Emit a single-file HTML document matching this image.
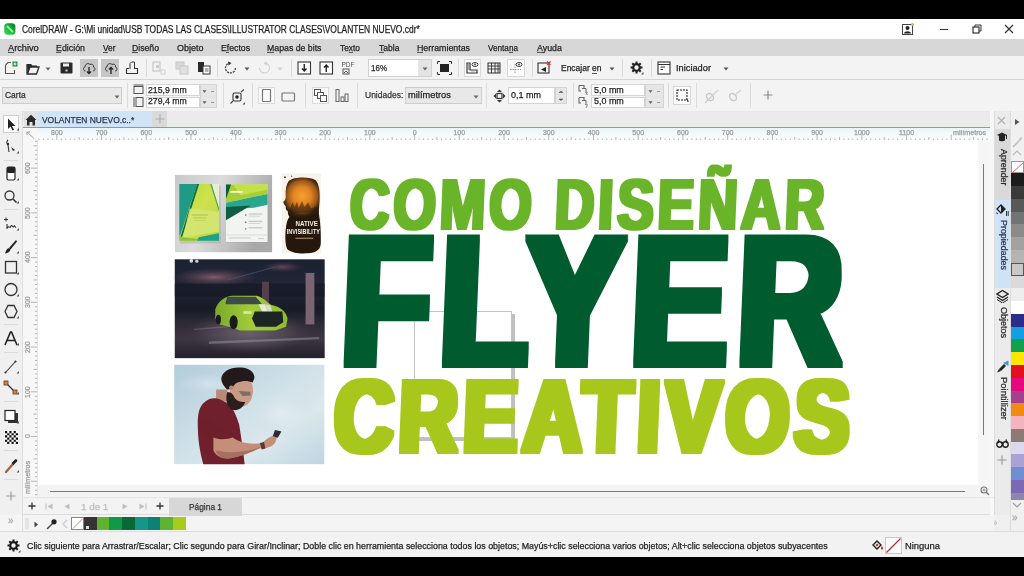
<!DOCTYPE html>
<html><head><meta charset="utf-8">
<style>
*{margin:0;padding:0;box-sizing:border-box}
html,body{width:1024px;height:576px;overflow:hidden;background:#f0f0f0;-webkit-font-smoothing:antialiased;will-change:transform;font-family:"Liberation Sans",sans-serif;color:#222}
.a{position:absolute}
#top{left:0;top:0;width:1024px;height:19px;background:#000}
#bot{left:0;top:556.5px;width:1024px;height:20px;background:#000}
#title{left:0;top:19px;width:1024px;height:20px;background:#fff}
#menu{left:0;top:39px;width:1024px;height:16.5px;background:#d7d7d7}
#tb1{left:0;top:55.5px;width:1024px;height:24.5px;background:#f3f3f3;border-bottom:1px solid #d4d4d4}
#prop{left:0;top:80px;width:1024px;height:31px;background:#f3f3f3}
#tabbar{left:23px;top:111px;width:969px;height:16px;background:linear-gradient(#ede8ee,#e8eee9)}
#ruler{left:37px;top:127px;width:955px;height:13px;background:linear-gradient(#e6f3f6,#f6fafb 55%,#fafafa)}
#vruler{left:23px;top:127px;width:14px;height:370px;background:#f7f7f7}
#toolbox{left:0;top:111px;width:23px;height:420px;background:#f0f0f0}
#canvas{left:37px;top:140px;width:941px;height:345px;background:#fff}
#cright{left:978px;top:140px;width:15px;height:357px;background:#f6f6f6}
#hscroll{left:37px;top:485px;width:941px;height:12px;background:#f3f3f3}
#pagenav{left:23px;top:497px;width:971px;height:18px;background:#f3f3f3;border-bottom:1px solid #dcdcdc}
#palrow{left:0;top:515px;width:994px;height:16px;background:#f5f5f5}
#status{left:0;top:531px;width:1024px;height:25px;background:#f0f0f0;border-top:1px solid #dedede}
#dock{left:993px;top:111px;width:17px;height:404px;background:#ececec}
#pal{left:1009px;top:111px;width:15px;height:420px;background:#f0f0f0}
.t{position:absolute;white-space:nowrap;line-height:1;font-family:"Liberation Sans",sans-serif;-webkit-text-stroke:0.25px currentColor}

.big{position:absolute;font-weight:bold;white-space:nowrap;transform-origin:0 0;line-height:1}
</style></head><body>
<div class="a" id="top"></div>
<div class="a" id="bot"></div>
<div class="a" id="title"></div>
<div class="a menu" id="menu"></div>
<div class="a" id="tb1"></div>
<div class="a" id="prop"></div>
<div class="a" id="toolbox"></div>
<div class="a" id="tabbar"></div>
<div class="a" id="ruler"></div>
<div class="a" id="vruler"></div>
<div class="a" id="canvas"></div>
<div class="a" id="cright"></div>
<div class="a" id="hscroll"></div>
<div class="a" id="pagenav"></div>
<div class="a" id="palrow"></div>
<div class="a" id="status"></div>
<div class="a" id="dock"></div>
<div class="a" id="pal"></div>

<svg class="a" style="left:172px;top:172px;width:103px;height:84px" viewBox="0 0 706 576" preserveAspectRatio="none">
<defs><linearGradient id="mg" x1="0" y1="0" x2="1" y2="0.3"><stop offset="0" stop-color="#c9c9c9"/><stop offset="0.45" stop-color="#dcdcdc"/><stop offset="1" stop-color="#a9a9a9"/></linearGradient>
<linearGradient id="f1g" x1="0" y1="0" x2="1" y2="1"><stop offset="0" stop-color="#b8d83a"/><stop offset="0.5" stop-color="#cfe24e"/><stop offset="1" stop-color="#b0d640"/></linearGradient></defs>
<rect x="20" y="20" width="666" height="530" fill="url(#mg)"/>
<rect x="55" y="95" width="280" height="395" fill="#9a9a9a" opacity="0.35"/>
<rect x="375" y="95" width="285" height="390" fill="#9a9a9a" opacity="0.35"/>
<rect x="50" y="82" width="272" height="390" fill="url(#f1g)"/>
<polygon points="50,82 172,82 60,423 50,440" fill="#1f9a84"/>
<polygon points="172,82 186,82 72,440 56,450" fill="#0d6e48"/>
<polygon points="270,82 322,82 322,250" fill="#e6efd6"/>
<polygon points="262,82 272,82 322,245 322,270" fill="#2a8a50" opacity="0.7"/>
<polygon points="121,251 322,272 322,409 74,447" fill="#d6e676" opacity="0.85"/>
<polygon points="50,440 74,447 184,460 160,472 50,472" fill="#8cc440"/>
<polygon points="184,447 322,420 322,472 170,472" fill="#1fa088"/>
<rect x="135" y="290" width="110" height="10" fill="#9ab83a" opacity="0.55"/>
<rect x="145" y="310" width="90" height="8" fill="#9ab83a" opacity="0.5"/>
<rect x="150" y="330" width="80" height="6" fill="#9ab83a" opacity="0.4"/>
<rect x="370" y="85" width="285" height="395" fill="#f2f4f2"/>
<polygon points="370,85 655,85 655,150 370,210" fill="#a5cf35"/>
<polygon points="420,85 655,85 655,120 470,160" fill="#c6e04a"/>
<polygon points="370,210 655,150 655,225 560,245 370,255" fill="#2aa58f"/>
<polygon points="370,85 405,85 370,185" fill="#0d5a3e"/>
<polygon points="370,240 540,230 370,330" fill="#0f5d44"/>
<rect x="400" y="130" width="85" height="12" fill="#ffffff" opacity="0.9"/>
<rect x="525" y="285" width="95" height="6" fill="#b0b5b5"/><rect x="525" y="300" width="80" height="5" fill="#c5c9c9"/>
<rect x="525" y="335" width="95" height="6" fill="#b0b5b5"/><rect x="525" y="350" width="80" height="5" fill="#c5c9c9"/>
<rect x="525" y="380" width="95" height="6" fill="#b0b5b5"/><rect x="500" y="290" width="10" height="10" fill="#777"/><rect x="500" y="340" width="10" height="10" fill="#777"/><rect x="500" y="385" width="10" height="10" fill="#888"/>
<rect x="375" y="430" width="275" height="4" fill="#c8cccc"/><rect x="390" y="450" width="150" height="5" fill="#bbb"/><rect x="590" y="455" width="40" height="5" fill="#bbb"/>
</svg>
<svg class="a" style="left:276px;top:172px;width:50px;height:86px" viewBox="0 0 335 576" preserveAspectRatio="none">
<defs><radialGradient id="pg" gradientUnits="userSpaceOnUse" cx="175" cy="160" r="150"><stop offset="0" stop-color="#f7a232"/><stop offset="0.4" stop-color="#e08422"/><stop offset="0.68" stop-color="#985818"/><stop offset="0.86" stop-color="#3a2412"/><stop offset="1" stop-color="#26170d"/></radialGradient></defs>
<rect x="40" y="10" width="262" height="535" fill="#f8f2ea"/>
<path d="M85,60 C120,30 230,30 265,55 C292,80 298,150 290,220 C288,250 285,270 290,300 C298,340 302,420 300,480 C296,520 270,540 210,545 C150,548 100,540 75,515 C62,490 60,430 65,390 C68,350 75,320 90,300 C82,288 78,278 80,265 C70,255 62,245 66,232 C58,220 48,212 50,200 C62,188 66,175 65,160 C62,120 68,85 85,60 Z" fill="url(#pg)"/>
<path d="M95,245 L110,205 L125,235 L140,200 L152,240 L175,195 L190,235 L215,205 L235,245 L270,230 L280,270 L90,275Z" fill="#2e1a0c" opacity="0.55"/>
<circle cx="60" cy="35" r="6" fill="#3a2a20"/><circle cx="105" cy="28" r="4" fill="#3a2a20"/><circle cx="285" cy="505" r="8" fill="#3a2a20" opacity="0.6"/>
<text x="130" y="362" font-family="Liberation Sans" font-weight="bold" font-size="44" fill="#f4efe8" textLength="150" lengthAdjust="spacingAndGlyphs">NATIVE</text>
<text x="72" y="418" font-family="Liberation Sans" font-weight="bold" font-size="48" fill="#f4efe8" textLength="222" lengthAdjust="spacingAndGlyphs">INVISIBILITY</text>
<rect x="130" y="440" width="120" height="9" fill="#b09a80" opacity="0.75"/>
</svg>
<svg class="a" style="left:172px;top:256px;width:156px;height:106px" viewBox="0 0 848 576" preserveAspectRatio="none">
<defs><linearGradient id="cg" x1="0" y1="0" x2="0" y2="1"><stop offset="0" stop-color="#1c2232"/><stop offset="0.3" stop-color="#222636"/><stop offset="0.5" stop-color="#161b26"/><stop offset="0.62" stop-color="#2a2834"/><stop offset="0.8" stop-color="#3c3642"/><stop offset="1" stop-color="#23202a"/></linearGradient>
<radialGradient id="pk" cx="0.5" cy="0.5" r="0.5"><stop offset="0" stop-color="#8a6070" stop-opacity="0.9"/><stop offset="1" stop-color="#5a4050" stop-opacity="0"/></radialGradient>
<radialGradient id="fl" cx="0.5" cy="0.5" r="0.5"><stop offset="0" stop-color="#6a6068"/><stop offset="0.6" stop-color="#4a4250"/><stop offset="1" stop-color="#3a3442" stop-opacity="0"/></radialGradient>
<linearGradient id="carg" x1="0" y1="0" x2="1" y2="0"><stop offset="0" stop-color="#7aaa2a"/><stop offset="0.5" stop-color="#a4cc3a"/><stop offset="1" stop-color="#8cbc30"/></linearGradient></defs>
<rect x="15" y="18" width="815" height="537" fill="url(#cg)"/>
<ellipse cx="230" cy="115" rx="230" ry="50" fill="url(#pk)"/>
<ellipse cx="600" cy="60" rx="110" ry="28" fill="url(#pk)" opacity="0.7"/>
<path d="M300,130 L560,60" stroke="#505a70" stroke-width="6" opacity="0.6"/>
<circle cx="105" cy="26" r="10" fill="#e8f4ff" opacity="0.9"/><circle cx="135" cy="28" r="9" fill="#e0f0ff" opacity="0.85"/>
<rect x="15" y="150" width="815" height="70" fill="#131822" opacity="0.6"/>
<rect x="489" y="140" width="38" height="150" fill="#54404c"/>
<rect x="726" y="92" width="48" height="280" fill="#7a6472"/>
<ellipse cx="420" cy="420" rx="360" ry="110" fill="url(#fl)"/>
<polygon points="200,465 800,440 800,452 200,478" fill="#b0a8b4" opacity="0.4"/>
<polygon points="120,395 300,380 300,388 120,402" fill="#a09aa8" opacity="0.3"/>
<path d="M235,290 C250,245 290,218 330,216 L460,216 C500,226 520,256 540,266 C590,276 620,300 628,340 L620,385 L560,405 L370,405 L330,390 L260,372 L235,340 Z" fill="url(#carg)"/>
<path d="M300,222 L455,222 L490,262 L290,262 Z" fill="#3c4a48"/>
<path d="M450,302 L600,302 L605,360 L565,385 L455,385 L435,340 Z" fill="#1c2424"/>
<path d="M470,262 L505,262 L520,300 L490,300 Z" fill="#e6eadc"/>
<path d="M505,262 L535,268 L545,300 L522,300 Z" fill="#d6dcc8"/>
<ellipse cx="335" cy="360" rx="22" ry="38" fill="#181a1c"/>
<ellipse cx="252" cy="345" rx="14" ry="26" fill="#181a1c"/>
<rect x="388" y="300" width="44" height="14" fill="#e9f0c8" opacity="0.8"/>
</svg>
<svg class="a" style="left:172px;top:362px;width:156px;height:106px" viewBox="0 0 848 576" preserveAspectRatio="none">
<defs><linearGradient id="sg" x1="0" y1="0" x2="1" y2="1"><stop offset="0" stop-color="#b2cddb"/><stop offset="0.5" stop-color="#d2e2e9"/><stop offset="0.7" stop-color="#dbe8ed"/><stop offset="1" stop-color="#bed5e0"/></linearGradient>
<radialGradient id="cl" cx="0.5" cy="0.5" r="0.5"><stop offset="0" stop-color="#e2ecef"/><stop offset="1" stop-color="#d0e0e8" stop-opacity="0"/></radialGradient></defs>
<rect x="12" y="15" width="816" height="540" fill="url(#sg)"/>
<ellipse cx="600" cy="280" rx="200" ry="140" fill="url(#cl)"/>
<ellipse cx="200" cy="120" rx="180" ry="60" fill="url(#cl)" opacity="0.6"/>
<path d="M240,150 L300,150 L305,215 L240,215 Z" fill="#b88a78"/>
<path d="M175,220 C200,195 235,190 265,205 L305,225 C330,245 350,290 365,340 C375,400 385,470 395,555 L170,555 C150,480 140,420 140,330 C140,280 150,240 175,220 Z" fill="#70202c"/>
<path d="M145,330 C160,300 200,300 225,330 C255,360 300,385 330,395 L330,420 C290,430 250,430 215,420 C180,410 150,380 145,330 Z" fill="#6d1f2a"/>
<path d="M225,410 C260,425 300,420 330,410 C370,440 430,450 490,440 C510,420 540,400 565,395 C575,410 565,440 545,455 C520,470 495,470 470,470 C420,490 360,520 300,525 C260,525 235,505 225,480 Z" fill="#c58e78"/>
<path d="M240,480 C300,500 400,490 480,462 L470,472 C420,495 360,520 300,525 C260,525 240,505 240,480 Z" fill="#a87060"/>
<path d="M478,440 L500,435 L508,470 L488,475 Z" fill="#5a3a30"/>
<path d="M560,370 L595,378 L575,412 L548,402 Z" fill="#2a2a30"/>
<path d="M320,90 C360,80 420,90 435,120 C445,150 440,180 430,205 C420,225 400,240 380,245 L330,240 C315,200 310,140 320,90 Z" fill="#c99a86"/>
<path d="M300,165 C315,160 330,170 338,190 C348,210 370,218 398,218 C390,240 372,260 345,262 C322,262 305,245 298,220 C294,200 295,180 300,165 Z" fill="#2b1e1c"/>
<path d="M268,90 C272,50 320,25 375,30 C420,32 450,55 448,88 L438,112 C415,100 385,100 355,112 C340,120 332,132 328,145 L300,150 C285,135 268,115 268,90 Z" fill="#221a1a"/>
<path d="M360,158 L425,162 L428,182 L385,185 Z" fill="#5a5a60" opacity="0.7"/><circle cx="322" cy="140" r="12" fill="#b88a78"/>
</svg>
<div class="a" style="left:414px;top:311px;width:98px;height:127px;border:1px solid #c4c4c4;box-shadow:3px 3px 0 #c0c0c0"></div>
<!--BIG-->
<svg class="a" style="left:0;top:0" width="1024" height="576" viewBox="0 0 1024 576"><defs>
<filter id="dt1" x="0" y="0" width="1024" height="576" filterUnits="userSpaceOnUse"><feMorphology operator="dilate" radius="2.20 1.20"/></filter>
<filter id="dt2" x="0" y="0" width="1024" height="576" filterUnits="userSpaceOnUse"><feMorphology operator="dilate" radius="6.00 3.00"/></filter>
<filter id="dt3" x="0" y="0" width="1024" height="576" filterUnits="userSpaceOnUse"><feMorphology operator="dilate" radius="3.50 1.80"/></filter>
</defs>
<g filter="url(#dt1)"><text transform="translate(349.00 229.00) scale(0.7674 1) skewX(-3.0)" font-family="Liberation Sans" font-weight="bold" font-size="71.43" letter-spacing="5.0" fill="#6bb42c">COMO DISEÑAR</text></g>
<g filter="url(#dt2)"><text transform="translate(340.00 365.00) scale(0.7781 1) skewX(-3.0)" font-family="Liberation Sans" font-weight="bold" font-size="185.34" letter-spacing="13.0" fill="#005c2e">FLYER</text></g>
<g filter="url(#dt3)"><text transform="translate(333.00 452.00) scale(0.7922 1) skewX(-3.0)" font-family="Liberation Sans" font-weight="bold" font-size="103.14" letter-spacing="7.0" fill="#a8c71a">CREATIVOS</text></g>
</svg>
<!--/BIG-->
<!--C1-->
<svg class="a" style="left:3px;top:22px" width="14" height="14" viewBox="0 0 14 14"><defs><linearGradient id="lg" x1="0" y1="1" x2="1" y2="0"><stop offset="0" stop-color="#2fe05c"/><stop offset="0.5" stop-color="#1cb841"/><stop offset="1" stop-color="#07721c"/></linearGradient></defs><rect x="1.2" y="1.2" width="11.2" height="11.5" rx="3.5" fill="url(#lg)"/><path d="M4.5,4.5 L9.5,9.5" stroke="#9cf09c" stroke-width="1.8" stroke-linecap="round"/></svg>
<div class="a t" style="left:22px;top:24.55px;font-size:10px;color:#222;transform:scaleX(0.842);transform-origin:0 0">CorelDRAW - G:\Mi unidad\USB TODAS LAS CLASES\ILLUSTRATOR CLASES\VOLANTEN NUEVO.cdr*</div>
<svg class="a" style="left:902px;top:23px" width="12" height="12" viewBox="0 0 12 12"><rect x="0.5" y="1.5" width="10" height="10" fill="#fff" stroke="#444" stroke-width="1"/><circle cx="5.5" cy="5" r="2" fill="#222"/><path d="M2,10.5 C2.5,7.5 8.5,7.5 9,10.5Z" fill="#222"/><circle cx="10.5" cy="1.5" r="1.5" fill="#f0a050"/></svg>
<div class="a" style="left:940px;top:29px;width:8px;height:1.4px;background:#333"></div>
<svg class="a" style="left:972px;top:24px" width="10" height="10" viewBox="0 0 10 10"><rect x="1" y="3" width="6" height="6" fill="none" stroke="#333" stroke-width="1.2"/><path d="M3,3 V1 H9 V7 H7" fill="none" stroke="#333" stroke-width="1"/></svg>
<svg class="a" style="left:1004px;top:24px" width="10" height="10" viewBox="0 0 10 10"><path d="M1,1 L9,9 M9,1 L1,9" stroke="#333" stroke-width="1.2"/></svg>
<div class="a t" style="left:7.5px;top:43px;font-size:9.6px;color:#1e1e1e;transform:scaleX(0.961);transform-origin:0 0">Archivo</div>
<div class="a" style="left:7.50px;top:52.3px;width:6.15px;height:0.9px;background:#555"></div>
<div class="a t" style="left:55.5px;top:43px;font-size:9.6px;color:#1e1e1e;transform:scaleX(0.921);transform-origin:0 0">Edición</div>
<div class="a" style="left:55.50px;top:52.3px;width:5.90px;height:0.9px;background:#555"></div>
<div class="a t" style="left:102.5px;top:43px;font-size:9.6px;color:#1e1e1e;transform:scaleX(0.867);transform-origin:0 0">Ver</div>
<div class="a" style="left:102.50px;top:52.3px;width:5.55px;height:0.9px;background:#555"></div>
<div class="a t" style="left:132px;top:43px;font-size:9.6px;color:#1e1e1e;transform:scaleX(0.904);transform-origin:0 0">Diseño</div>
<div class="a" style="left:132.00px;top:52.3px;width:6.26px;height:0.9px;background:#555"></div>
<div class="a t" style="left:176.5px;top:43px;font-size:9.6px;color:#1e1e1e;transform:scaleX(0.937);transform-origin:0 0">Objeto</div>
<div class="a" style="left:188.50px;top:52.3px;width:2.00px;height:0.9px;background:#555"></div>
<div class="a t" style="left:220.5px;top:43px;font-size:9.6px;color:#1e1e1e;transform:scaleX(0.906);transform-origin:0 0">Efectos</div>
<div class="a" style="left:226.30px;top:52.3px;width:2.42px;height:0.9px;background:#555"></div>
<div class="a t" style="left:266.5px;top:43px;font-size:9.6px;color:#1e1e1e;transform:scaleX(0.912);transform-origin:0 0">Mapas de bits</div>
<div class="a" style="left:266.50px;top:52.3px;width:7.29px;height:0.9px;background:#555"></div>
<div class="a t" style="left:339.75px;top:43px;font-size:9.6px;color:#1e1e1e;transform:scaleX(0.872);transform-origin:0 0">Texto</div>
<div class="a" style="left:348.59px;top:52.3px;width:4.18px;height:0.9px;background:#555"></div>
<div class="a t" style="left:378.5px;top:43px;font-size:9.6px;color:#1e1e1e;transform:scaleX(0.893);transform-origin:0 0">Tabla</div>
<div class="a" style="left:378.50px;top:52.3px;width:5.24px;height:0.9px;background:#555"></div>
<div class="a t" style="left:416.75px;top:43px;font-size:9.6px;color:#1e1e1e;transform:scaleX(0.920);transform-origin:0 0">Herramientas</div>
<div class="a" style="left:416.75px;top:52.3px;width:6.38px;height:0.9px;background:#555"></div>
<div class="a t" style="left:488px;top:43px;font-size:9.6px;color:#1e1e1e;transform:scaleX(0.851);transform-origin:0 0">Ventana</div>
<div class="a" style="left:508.91px;top:52.3px;width:4.55px;height:0.9px;background:#555"></div>
<div class="a t" style="left:537px;top:43px;font-size:9.6px;color:#1e1e1e;transform:scaleX(0.924);transform-origin:0 0">Ayuda</div>
<div class="a" style="left:537.00px;top:52.3px;width:5.92px;height:0.9px;background:#555"></div>
<!--/C1-->
<!--C2-->
<svg class="a" style="left:4px;top:61px" width="14" height="14" viewBox="0 0 14 14"><path d="M1.5,4 L4,1.5 H7 M1.5,4 V12.5 H10.5 V9" fill="none" stroke="#555" stroke-width="1.1"/><rect x="8.5" y="0.5" width="5" height="5" fill="#1c8f4a"/><path d="M11,1.5 V4.5 M9.5,3 H12.5" stroke="#fff" stroke-width="1"/></svg>
<svg class="a" style="left:26px;top:62px" width="14" height="13" viewBox="0 0 14 13"><path d="M1,2 H5 L6.5,3.5 H11 V5 H4 L1.5,12 Z" fill="#2a2a2a"/><path d="M1,2 V12 H10.5 L13,5 H4 L1.5,12" fill="none" stroke="#2a2a2a" stroke-width="1.3"/></svg>
<svg class="a" style="left:45px;top:66.5px" width="6" height="4" viewBox="0 0 6 4"><path d="M0.5,0.5 L5.5,0.5 L3,3.5Z" fill="#666"/></svg>
<svg class="a" style="left:60px;top:62px" width="13" height="12" viewBox="0 0 13 12"><rect x="0.5" y="0.5" width="12" height="11" rx="1" fill="#2a2a2a"/><rect x="3" y="1.5" width="6" height="3" fill="#eee"/><rect x="5.5" y="7.5" width="2" height="2" fill="#ccc"/></svg>
<div class="a" style="left:80px;top:59px;width:17.5px;height:17.5px;background:#c6c6c6;"></div>
<div class="a" style="left:101.4px;top:59px;width:17.6px;height:17.5px;background:#c6c6c6;"></div>
<svg class="a" style="left:82px;top:61px" width="14" height="14" viewBox="0 0 14 14"><path d="M3.5,10 C1,10 0.8,6.5 3,6 C3,3 6,1.5 8,3.5 C9.5,2.5 12,3.5 11.5,6 C13.5,6.5 13.5,10 11,10" fill="none" stroke="#333" stroke-width="1"/><path d="M7,6 V12.5 M5,10.5 L7,12.5 L9,10.5" fill="none" stroke="#222" stroke-width="1.3"/></svg>
<svg class="a" style="left:103.5px;top:61px" width="14" height="14" viewBox="0 0 14 14"><path d="M3.5,10 C1,10 0.8,6.5 3,6 C3,3 6,1.5 8,3.5 C9.5,2.5 12,3.5 11.5,6 C13.5,6.5 13.5,10 11,10" fill="none" stroke="#333" stroke-width="1"/><path d="M7,13 V6.5 M5,8.5 L7,6.5 L9,8.5" fill="none" stroke="#222" stroke-width="1.3"/></svg>
<svg class="a" style="left:125px;top:61px" width="14" height="14" viewBox="0 0 14 14"><path d="M5,8 V2.5 L6.5,1 H9.5 V8" fill="none" stroke="#333" stroke-width="1"/><path d="M1.5,7.5 H4 M10,7.5 H12.5 V12.5 H1.5 V7.5" fill="none" stroke="#333" stroke-width="1.1"/></svg>
<div class="a" style="left:145.5px;top:59px;width:1px;height:18px;background:#dcdcdc;"></div>
<svg class="a" style="left:152px;top:61px" width="14" height="14" viewBox="0 0 14 14"><rect x="1" y="1" width="7" height="9" fill="none" stroke="#c8c8c8" stroke-width="1.2"/><rect x="4" y="4" width="3" height="3" fill="#ccc"/><rect x="9" y="9" width="4" height="4" fill="none" stroke="#d0d0d0"/></svg>
<svg class="a" style="left:175px;top:61px" width="14" height="14" viewBox="0 0 14 14"><rect x="1" y="1" width="8" height="7" fill="#d8d8d8" stroke="#c8c8c8"/><rect x="5" y="5" width="8" height="8" fill="#e0e0e0" stroke="#c8c8c8"/></svg>
<svg class="a" style="left:197px;top:61px" width="14" height="14" viewBox="0 0 14 14"><rect x="1" y="1" width="6" height="10" fill="#2a2a2a"/><rect x="6" y="5" width="7" height="8" fill="#fff" stroke="#333"/><path d="M8,8 H11.5 M8,10 H11.5" stroke="#666"/></svg>
<div class="a" style="left:217px;top:59px;width:1px;height:18px;background:#dcdcdc;"></div>
<svg class="a" style="left:224px;top:61px" width="14" height="14" viewBox="0 0 14 14"><path d="M11.5,7 A5,5 0 1 1 6,2" fill="none" stroke="#444" stroke-width="1.2" stroke-dasharray="2.2 0.8"/><path d="M4,0.5 L7.5,2 L4.5,4.5Z" fill="#333"/></svg>
<svg class="a" style="left:243.5px;top:67px" width="6" height="4" viewBox="0 0 6 4"><path d="M0.5,0.5 L5.5,0.5 L3,3.5Z" fill="#555"/></svg>
<svg class="a" style="left:257px;top:61px" width="14" height="14" viewBox="0 0 14 14"><path d="M2.5,7 A5,5 0 1 0 8,2" fill="none" stroke="#cfcfcf" stroke-width="1.2"/><path d="M10,0.5 L6.5,2 L9.5,4.5Z" fill="#cfcfcf"/></svg>
<svg class="a" style="left:276.5px;top:67px" width="6" height="4" viewBox="0 0 6 4"><path d="M0.5,0.5 L5.5,0.5 L3,3.5Z" fill="#cfcfcf"/></svg>
<div class="a" style="left:291px;top:59px;width:1px;height:18px;background:#dcdcdc;"></div>
<svg class="a" style="left:297px;top:61px" width="15" height="14" viewBox="0 0 15 14"><rect x="1" y="1" width="12.5" height="12" fill="#fff" stroke="#333" stroke-width="1.1"/><path d="M7.25,3 V10 M5,7.5 L7.25,10 L9.5,7.5" fill="none" stroke="#222" stroke-width="1.4"/></svg>
<svg class="a" style="left:319px;top:61px" width="15" height="14" viewBox="0 0 15 14"><rect x="1" y="1" width="12.5" height="12" fill="#fff" stroke="#333" stroke-width="1.1"/><path d="M7.25,11 V4 M5,6.5 L7.25,4 L9.5,6.5" fill="none" stroke="#222" stroke-width="1.4"/></svg>
<svg class="a" style="left:341px;top:60px" width="15" height="16" viewBox="0 0 15 16"><text x="0.5" y="6.5" font-family="Liberation Sans" font-size="6.5" fill="#555">PDF</text><rect x="2" y="9" width="6" height="5" fill="none" stroke="#555" stroke-width="1"/><path d="M3,13 L5,11 L7,13" stroke="#555" fill="none"/></svg>
<div class="a" style="left:367.5px;top:59px;width:64px;height:17.5px;background:#fff;border:1px solid #d0d0d0;"></div>
<div class="a" style="left:418px;top:60px;width:13px;height:15.5px;background:#e4e4e4;"></div>
<svg class="a" style="left:421.5px;top:66.5px" width="6" height="4" viewBox="0 0 6 4"><path d="M0.5,0.5 L5.5,0.5 L3,3.5Z" fill="#666"/></svg>
<div class="a t" style="left:371px;top:62.7px;font-size:9.5px;color:#222;transform:scaleX(0.842);transform-origin:0 0">16%</div>
<svg class="a" style="left:437px;top:61px" width="15" height="14" viewBox="0 0 15 14"><rect x="3" y="3" width="9" height="8" fill="#222"/><path d="M0.5,3 V0.5 H3 M12,0.5 H14.5 V3 M14.5,11 V13.5 H12 M3,13.5 H0.5 V11" fill="none" stroke="#333" stroke-width="1"/></svg>
<div class="a" style="left:457.5px;top:59px;width:1px;height:18px;background:#dcdcdc;"></div>
<div class="a" style="left:463.5px;top:59px;width:17px;height:17.5px;background:#fdfdfd;border:1px solid #d8d8d8;"></div>
<svg class="a" style="left:465px;top:61px" width="14" height="14" viewBox="0 0 14 14"><path d="M2,2 V12 H12 V9 H5 V2 Z" fill="none" stroke="#333" stroke-width="1.2"/><path d="M3,4 H4 M3,6 H4 M3,8 H4 M7,10.5 V11 M9,10.5 V11" stroke="#555"/><ellipse cx="10" cy="3.5" rx="3" ry="2" fill="none" stroke="#444"/><circle cx="10" cy="3.5" r="0.9" fill="#444"/></svg>
<svg class="a" style="left:487px;top:61px" width="14" height="14" viewBox="0 0 14 14"><rect x="1" y="2" width="12" height="10" fill="none" stroke="#333"/><path d="M1,5 H13 M1,8 H13 M4.5,2 V12 M8,2 V12 M11,2 V12" stroke="#333" stroke-width="0.9"/></svg>
<div class="a" style="left:507px;top:59px;width:17.5px;height:17.5px;background:#fdfdfd;border:1px solid #d8d8d8;"></div>
<svg class="a" style="left:509px;top:61px" width="14" height="14" viewBox="0 0 14 14"><path d="M6,3 V13 M1,8.5 H12" stroke="#999" stroke-width="1" stroke-dasharray="1.5 1"/><ellipse cx="10" cy="3.5" rx="3" ry="2" fill="none" stroke="#444"/><circle cx="10" cy="3.5" r="0.9" fill="#444"/></svg>
<div class="a" style="left:531.5px;top:59px;width:1px;height:18px;background:#dcdcdc;"></div>
<svg class="a" style="left:537px;top:61px" width="14" height="14" viewBox="0 0 14 14"><rect x="1" y="2" width="11" height="10" fill="none" stroke="#333" stroke-width="1.1"/><path d="M9,6 L4,8.5 L9,11 Z" fill="#222"/><path d="M10,0.5 L13.5,4 M13.5,0.5 L10,4" stroke="#e03030" stroke-width="1.2"/></svg>
<div class="a t" style="left:561px;top:62.7px;font-size:9.5px;color:#222;transform:scaleX(0.892);transform-origin:0 0">Encajar en</div>
<div class="a" style="left:592.0776363323586px;top:72.6px;width:4.711181833820747px;height:0.9px;background:#555;"></div>
<svg class="a" style="left:609px;top:66.5px" width="6" height="4" viewBox="0 0 6 4"><path d="M0.5,0.5 L5.5,0.5 L3,3.5Z" fill="#555"/></svg>
<div class="a" style="left:622px;top:59px;width:1px;height:18px;background:#dcdcdc;"></div>
<svg class="a" style="left:630px;top:61px" width="14" height="14" viewBox="0 0 14 14"><circle cx="6.5" cy="6.5" r="3.3" fill="none" stroke="#222" stroke-width="2.2"/><path d="M6.5,0.5 V3 M6.5,10 V12.5 M0.5,6.5 H3 M10,6.5 H12.5 M2.3,2.3 L4,4 M9,9 L10.7,10.7 M10.7,2.3 L9,4 M4,9 L2.3,10.7" stroke="#222" stroke-width="2"/><path d="M11,13.5 L13.5,13.5 L13.5,11Z" fill="#555"/></svg>
<div class="a" style="left:650.5px;top:59px;width:1px;height:18px;background:#dcdcdc;"></div>
<svg class="a" style="left:657px;top:61px" width="14" height="14" viewBox="0 0 14 14"><rect x="1" y="1" width="12" height="12" fill="#fff" stroke="#333" stroke-width="1.1"/><path d="M1,3.5 H13" stroke="#333"/><path d="M3.5,6 H8 M3.5,8.5 H6" stroke="#333" stroke-width="1"/></svg>
<div class="a t" style="left:676px;top:62.7px;font-size:9.5px;color:#222;transform:scaleX(0.975);transform-origin:0 0">Iniciador</div>
<svg class="a" style="left:722.5px;top:66.5px" width="6" height="4" viewBox="0 0 6 4"><path d="M0.5,0.5 L5.5,0.5 L3,3.5Z" fill="#555"/></svg>
<!--/C2-->
<!--C3-->
<div class="a" style="left:1.9px;top:87px;width:120.6px;height:17.4px;background:#e8e8e8;border:1px solid #cdcdcd;"></div>
<div class="a t" style="left:5.3px;top:90.4px;font-size:9.5px;color:#333;transform:scaleX(0.891);transform-origin:0 0">Carta</div>
<svg class="a" style="left:113.5px;top:94.5px" width="6" height="4" viewBox="0 0 6 4"><path d="M0.5,0.5 L5.5,0.5 L3,3.5Z" fill="#666"/></svg>
<div class="a" style="left:127px;top:83px;width:1px;height:25px;background:#dcdcdc;"></div>
<svg class="a" style="left:133px;top:84px" width="11" height="24" viewBox="0 0 11 24"><rect x="1" y="2.5" width="9" height="7" fill="none" stroke="#555" stroke-width="1"/><path d="M0.5,1 H10.5" stroke="#555"/><rect x="3" y="13.5" width="7" height="9" fill="none" stroke="#555" stroke-width="1"/><path d="M1,13 V23" stroke="#555"/></svg>
<div class="a" style="left:146px;top:84.4px;width:54px;height:11.5px;background:#fff;border:1px solid #d4d4d4;"></div>
<div class="a" style="left:146px;top:96.5px;width:54px;height:11.7px;background:#fff;border:1px solid #d4d4d4;"></div>
<div class="a" style="left:200px;top:84.4px;width:17px;height:23.8px;background:#e6e6e6;border:1px solid #d4d4d4;"></div>
<svg class="a" style="left:202px;top:89.5px" width="14" height="4" viewBox="0 0 14 4"><path d="M1,0.5 H4 L2.5,2.5Z M9,1.5 H12" fill="#666" stroke="#666" stroke-width="0.6"/></svg>
<svg class="a" style="left:202px;top:101px" width="14" height="4" viewBox="0 0 14 4"><path d="M1,0.5 H4 L2.5,2.5Z M9,1.5 H12" fill="#666" stroke="#666" stroke-width="0.6"/></svg>
<div class="a t" style="left:148px;top:85.0px;font-size:9.5px;color:#222;transform:scaleX(0.916);transform-origin:0 0">215,9 mm</div>
<div class="a t" style="left:148px;top:96.4px;font-size:9.5px;color:#222;transform:scaleX(0.916);transform-origin:0 0">279,4 mm</div>
<div class="a" style="left:222.5px;top:83px;width:1px;height:25px;background:#dcdcdc;"></div>
<svg class="a" style="left:229px;top:89px" width="17" height="16" viewBox="0 0 17 16"><path d="M1.5,14.5 L4,12 M12,3 L15,0.5" stroke="#444" stroke-width="1.1"/><rect x="4" y="4" width="8" height="8" rx="1.5" fill="none" stroke="#333" stroke-width="1.1"/><circle cx="8" cy="8" r="1.8" fill="#222"/><path d="M13.5,15.5 H16 V13Z" fill="#555"/></svg>
<div class="a" style="left:252px;top:83px;width:1px;height:25px;background:#dcdcdc;"></div>
<div class="a" style="left:258.2px;top:87px;width:17.2px;height:17.4px;background:#fbfbfb;border:1px solid #dadada;"></div>
<svg class="a" style="left:261px;top:89px" width="12" height="14" viewBox="0 0 12 14"><rect x="1.5" y="0.5" width="8" height="12" rx="1" fill="none" stroke="#777" stroke-width="1.2"/></svg>
<svg class="a" style="left:281px;top:92px" width="15" height="10" viewBox="0 0 15 10"><rect x="1" y="1" width="12.5" height="8" rx="1" fill="none" stroke="#777" stroke-width="1.2"/></svg>
<div class="a" style="left:304.6px;top:83px;width:1px;height:25px;background:#dcdcdc;"></div>
<div class="a" style="left:311.6px;top:87px;width:17.7px;height:17.4px;background:#fbfbfb;border:1px solid #dadada;"></div>
<svg class="a" style="left:314px;top:89px" width="14" height="14" viewBox="0 0 14 14"><rect x="0.5" y="0.5" width="6" height="6" fill="none" stroke="#555" stroke-width="1"/><rect x="3.5" y="3.5" width="6" height="6" fill="#fbfbfb" stroke="#555" stroke-width="1"/><rect x="6.5" y="6.5" width="6" height="6" fill="#fbfbfb" stroke="#555" stroke-width="1"/></svg>
<svg class="a" style="left:335px;top:89px" width="14" height="14" viewBox="0 0 14 14"><rect x="1" y="0.5" width="3" height="12" fill="none" stroke="#666"/><rect x="6" y="8" width="3" height="4.5" fill="none" stroke="#666"/><rect x="10" y="5" width="3" height="7.5" fill="none" stroke="#666"/></svg>
<div class="a" style="left:357.3px;top:83px;width:1px;height:25px;background:#dcdcdc;"></div>
<div class="a t" style="left:365px;top:90.1px;font-size:9.5px;color:#333;transform:scaleX(0.895);transform-origin:0 0">Unidades:</div>
<div class="a" style="left:405.2px;top:87px;width:76.4px;height:17.4px;background:#e8e8e8;border:1px solid #cdcdcd;"></div>
<div class="a t" style="left:408.3px;top:90.1px;font-size:9.5px;color:#222;transform:scaleX(0.979);transform-origin:0 0">milímetros</div>
<svg class="a" style="left:472.5px;top:94.5px" width="6" height="4" viewBox="0 0 6 4"><path d="M0.5,0.5 L5.5,0.5 L3,3.5Z" fill="#666"/></svg>
<div class="a" style="left:486px;top:83px;width:1px;height:25px;background:#dcdcdc;"></div>
<svg class="a" style="left:493px;top:89px" width="13" height="14" viewBox="0 0 13 14"><path d="M6.5,0.5 L9,3 H4Z M6.5,13.5 L9,11 H4Z M0.5,7 L3,4.5 V9.5Z M12.5,7 L10,4.5 V9.5Z" fill="#333"/><rect x="4" y="4.5" width="5" height="5" fill="none" stroke="#333" stroke-width="1.2"/></svg>
<div class="a" style="left:508.2px;top:87px;width:46.4px;height:17.4px;background:#fff;border:1px solid #d4d4d4;"></div>
<div class="a" style="left:554.6px;top:87px;width:12.7px;height:17.4px;background:#e6e6e6;border:1px solid #d4d4d4;"></div>
<svg class="a" style="left:557px;top:90px" width="8" height="12" viewBox="0 0 8 12"><path d="M2,2.5 H6 L4,1Z M2,9 H6 L4,10.5Z" fill="#555" stroke="#555" stroke-width="0.5"/></svg>
<div class="a t" style="left:511.4px;top:90.1px;font-size:9.5px;color:#222;transform:scaleX(0.944);transform-origin:0 0">0,1 mm</div>
<div class="a" style="left:573px;top:83px;width:1px;height:25px;background:#dcdcdc;"></div>
<svg class="a" style="left:578px;top:84px" width="13" height="24" viewBox="0 0 13 24"><path d="M1,1.5 H6 V5 M1,1.5 V7 H3" fill="none" stroke="#666" stroke-width="1.1"/><path d="M4,4.5 H8 V9" fill="none" stroke="#666"/><text x="7.5" y="11" font-size="5" font-family="Liberation Sans" fill="#555">x</text><path d="M1,13.5 H6 V17 M1,13.5 V19 H3" fill="none" stroke="#666" stroke-width="1.1"/><path d="M4,16.5 H8 V21" fill="none" stroke="#666"/><text x="7.5" y="23" font-size="5" font-family="Liberation Sans" fill="#555">y</text></svg>
<div class="a" style="left:590.8px;top:84.4px;width:54.5px;height:11.5px;background:#fff;border:1px solid #d4d4d4;"></div>
<div class="a" style="left:590.8px;top:96.5px;width:54.5px;height:11.7px;background:#fff;border:1px solid #d4d4d4;"></div>
<div class="a" style="left:645.3px;top:84.4px;width:18.5px;height:23.8px;background:#e6e6e6;border:1px solid #d4d4d4;"></div>
<svg class="a" style="left:648px;top:89.5px" width="14" height="4" viewBox="0 0 14 4"><path d="M1,0.5 H4 L2.5,2.5Z M9,1.5 H12" fill="#666" stroke="#666" stroke-width="0.6"/></svg>
<svg class="a" style="left:648px;top:101px" width="14" height="4" viewBox="0 0 14 4"><path d="M1,0.5 H4 L2.5,2.5Z M9,1.5 H12" fill="#666" stroke="#666" stroke-width="0.6"/></svg>
<div class="a t" style="left:594px;top:85.0px;font-size:9.5px;color:#222;transform:scaleX(0.941);transform-origin:0 0">5,0 mm</div>
<div class="a t" style="left:594px;top:96.4px;font-size:9.5px;color:#222;transform:scaleX(0.941);transform-origin:0 0">5,0 mm</div>
<div class="a" style="left:668.4px;top:83px;width:1px;height:25px;background:#dcdcdc;"></div>
<div class="a" style="left:673.4px;top:86.2px;width:18px;height:18.8px;background:#fdfdfd;border:1px solid #d8d8d8;"></div>
<svg class="a" style="left:675px;top:88px" width="15" height="15" viewBox="0 0 15 15"><rect x="2" y="2" width="10" height="10" fill="none" stroke="#222" stroke-width="1.1" stroke-dasharray="2 1"/><path d="M11,10 L14,13.5 L12.5,14 Z" fill="#222"/></svg>
<div class="a" style="left:696px;top:83px;width:1px;height:25px;background:#dcdcdc;"></div>
<svg class="a" style="left:704px;top:89px" width="15" height="15" viewBox="0 0 15 15"><path d="M1,14 L14,1" stroke="#d0d0d0" stroke-width="1.5"/><ellipse cx="6" cy="8" rx="3" ry="4" transform="rotate(-40 6 8)" fill="none" stroke="#c8c8c8" stroke-width="1.4"/></svg>
<svg class="a" style="left:727px;top:89px" width="15" height="15" viewBox="0 0 15 15"><path d="M9,5 L14,1" stroke="#d0d0d0" stroke-width="1.5"/><ellipse cx="6" cy="8" rx="3" ry="4" transform="rotate(-40 6 8)" fill="none" stroke="#c8c8c8" stroke-width="1.4"/></svg>
<div class="a" style="left:750px;top:83px;width:1px;height:25px;background:#dcdcdc;"></div>
<svg class="a" style="left:763px;top:90px" width="10" height="10" viewBox="0 0 10 10"><path d="M5,0.5 V9.5 M0.5,5 H9.5" stroke="#888" stroke-width="1.2"/></svg>
<!--/C3-->
<!--C4-->
<div class="a" style="left:23.7px;top:111px;width:13.2px;height:16px;background:#e2e2e2;"></div>
<svg class="a" style="left:24.5px;top:113.5px" width="12" height="12" viewBox="0 0 12 12"><path d="M6,0.8 L11.5,6 H10 V11.5 H7.5 V8 H4.5 V11.5 H2 V6 H0.5 Z" fill="#2a2a2a"/></svg>
<div class="a" style="left:36.9px;top:111px;width:115.1px;height:16px;background:#cfe4f6;"></div>
<div class="a t" style="left:42.2px;top:114.6px;font-size:9.5px;color:#27334d;transform:scaleX(0.887);transform-origin:0 0">VOLANTEN NUEVO.c..*</div>
<div class="a" style="left:152px;top:111px;width:15px;height:16px;background:#dadada;"></div>
<svg class="a" style="left:155px;top:114px" width="10" height="10" viewBox="0 0 10 10"><path d="M5,0.5 V9.5 M0.5,5 H9.5" stroke="#b0b0b0" stroke-width="1.2"/></svg>
<div class="a" style="left:23px;top:127px;width:969px;height:1.2px;background:#64a8c8;"></div>
<svg class="a" style="left:26px;top:131px" width="9" height="8" viewBox="0 0 9 8"><path d="M1,1 L8,7.5 M1,1 V4 M1,1 H4" stroke="#999" stroke-width="0.9" fill="none"/></svg>
<svg class="a" style="left:0;top:0" width="1024" height="150" viewBox="0 0 1024 150"><path d="M38.95,138.5 V140 M43.42,138.5 V140 M47.90,138.5 V140 M52.37,138.5 V140 M56.84,134.5 V140 M61.31,138.5 V140 M65.78,138.5 V140 M70.26,138.5 V140 M74.73,138.5 V140 M79.20,137 V140 M83.67,138.5 V140 M88.14,138.5 V140 M92.62,138.5 V140 M97.09,138.5 V140 M101.56,134.5 V140 M106.03,138.5 V140 M110.50,138.5 V140 M114.98,138.5 V140 M119.45,138.5 V140 M123.92,137 V140 M128.39,138.5 V140 M132.86,138.5 V140 M137.34,138.5 V140 M141.81,138.5 V140 M146.28,134.5 V140 M150.75,138.5 V140 M155.22,138.5 V140 M159.70,138.5 V140 M164.17,138.5 V140 M168.64,137 V140 M173.11,138.5 V140 M177.58,138.5 V140 M182.06,138.5 V140 M186.53,138.5 V140 M191.00,134.5 V140 M195.47,138.5 V140 M199.94,138.5 V140 M204.42,138.5 V140 M208.89,138.5 V140 M213.36,137 V140 M217.83,138.5 V140 M222.30,138.5 V140 M226.78,138.5 V140 M231.25,138.5 V140 M235.72,134.5 V140 M240.19,138.5 V140 M244.66,138.5 V140 M249.14,138.5 V140 M253.61,138.5 V140 M258.08,137 V140 M262.55,138.5 V140 M267.02,138.5 V140 M271.50,138.5 V140 M275.97,138.5 V140 M280.44,134.5 V140 M284.91,138.5 V140 M289.38,138.5 V140 M293.86,138.5 V140 M298.33,138.5 V140 M302.80,137 V140 M307.27,138.5 V140 M311.74,138.5 V140 M316.22,138.5 V140 M320.69,138.5 V140 M325.16,134.5 V140 M329.63,138.5 V140 M334.10,138.5 V140 M338.58,138.5 V140 M343.05,138.5 V140 M347.52,137 V140 M351.99,138.5 V140 M356.46,138.5 V140 M360.94,138.5 V140 M365.41,138.5 V140 M369.88,134.5 V140 M374.35,138.5 V140 M378.82,138.5 V140 M383.30,138.5 V140 M387.77,138.5 V140 M392.24,137 V140 M396.71,138.5 V140 M401.18,138.5 V140 M405.66,138.5 V140 M410.13,138.5 V140 M414.60,134.5 V140 M419.07,138.5 V140 M423.54,138.5 V140 M428.02,138.5 V140 M432.49,138.5 V140 M436.96,137 V140 M441.43,138.5 V140 M445.90,138.5 V140 M450.38,138.5 V140 M454.85,138.5 V140 M459.32,134.5 V140 M463.79,138.5 V140 M468.26,138.5 V140 M472.74,138.5 V140 M477.21,138.5 V140 M481.68,137 V140 M486.15,138.5 V140 M490.62,138.5 V140 M495.10,138.5 V140 M499.57,138.5 V140 M504.04,134.5 V140 M508.51,138.5 V140 M512.98,138.5 V140 M517.46,138.5 V140 M521.93,138.5 V140 M526.40,137 V140 M530.87,138.5 V140 M535.34,138.5 V140 M539.82,138.5 V140 M544.29,138.5 V140 M548.76,134.5 V140 M553.23,138.5 V140 M557.70,138.5 V140 M562.18,138.5 V140 M566.65,138.5 V140 M571.12,137 V140 M575.59,138.5 V140 M580.06,138.5 V140 M584.54,138.5 V140 M589.01,138.5 V140 M593.48,134.5 V140 M597.95,138.5 V140 M602.42,138.5 V140 M606.90,138.5 V140 M611.37,138.5 V140 M615.84,137 V140 M620.31,138.5 V140 M624.78,138.5 V140 M629.26,138.5 V140 M633.73,138.5 V140 M638.20,134.5 V140 M642.67,138.5 V140 M647.14,138.5 V140 M651.62,138.5 V140 M656.09,138.5 V140 M660.56,137 V140 M665.03,138.5 V140 M669.50,138.5 V140 M673.98,138.5 V140 M678.45,138.5 V140 M682.92,134.5 V140 M687.39,138.5 V140 M691.86,138.5 V140 M696.34,138.5 V140 M700.81,138.5 V140 M705.28,137 V140 M709.75,138.5 V140 M714.22,138.5 V140 M718.70,138.5 V140 M723.17,138.5 V140 M727.64,134.5 V140 M732.11,138.5 V140 M736.58,138.5 V140 M741.06,138.5 V140 M745.53,138.5 V140 M750.00,137 V140 M754.47,138.5 V140 M758.94,138.5 V140 M763.42,138.5 V140 M767.89,138.5 V140 M772.36,134.5 V140 M776.83,138.5 V140 M781.30,138.5 V140 M785.78,138.5 V140 M790.25,138.5 V140 M794.72,137 V140 M799.19,138.5 V140 M803.66,138.5 V140 M808.14,138.5 V140 M812.61,138.5 V140 M817.08,134.5 V140 M821.55,138.5 V140 M826.02,138.5 V140 M830.50,138.5 V140 M834.97,138.5 V140 M839.44,137 V140 M843.91,138.5 V140 M848.38,138.5 V140 M852.86,138.5 V140 M857.33,138.5 V140 M861.80,134.5 V140 M866.27,138.5 V140 M870.74,138.5 V140 M875.22,138.5 V140 M879.69,138.5 V140 M884.16,137 V140 M888.63,138.5 V140 M893.10,138.5 V140 M897.58,138.5 V140 M902.05,138.5 V140 M906.52,134.5 V140 M910.99,138.5 V140 M915.46,138.5 V140 M919.94,138.5 V140 M924.41,138.5 V140 M928.88,137 V140 M933.35,138.5 V140 M937.82,138.5 V140 M942.30,138.5 V140 M946.77,138.5 V140 M951.24,134.5 V140 M955.71,138.5 V140 M960.18,138.5 V140 M964.66,138.5 V140 M969.13,138.5 V140 M973.60,137 V140 M978.07,138.5 V140 M982.54,138.5 V140 M987.02,138.5 V140" stroke="#a4a4a4" stroke-width="0.8"/></svg>
<div class="a t" style="left:51.00px;top:128.6px;font-size:7px;color:#9c9c9c">800</div>
<div class="a t" style="left:95.72px;top:128.6px;font-size:7px;color:#9c9c9c">700</div>
<div class="a t" style="left:140.44px;top:128.6px;font-size:7px;color:#9c9c9c">600</div>
<div class="a t" style="left:185.16px;top:128.6px;font-size:7px;color:#9c9c9c">500</div>
<div class="a t" style="left:229.88px;top:128.6px;font-size:7px;color:#9c9c9c">400</div>
<div class="a t" style="left:274.60px;top:128.6px;font-size:7px;color:#9c9c9c">300</div>
<div class="a t" style="left:319.32px;top:128.6px;font-size:7px;color:#9c9c9c">200</div>
<div class="a t" style="left:364.04px;top:128.6px;font-size:7px;color:#9c9c9c">100</div>
<div class="a t" style="left:412.65px;top:128.6px;font-size:7px;color:#9c9c9c">0</div>
<div class="a t" style="left:453.48px;top:128.6px;font-size:7px;color:#9c9c9c">100</div>
<div class="a t" style="left:498.20px;top:128.6px;font-size:7px;color:#9c9c9c">200</div>
<div class="a t" style="left:542.92px;top:128.6px;font-size:7px;color:#9c9c9c">300</div>
<div class="a t" style="left:587.64px;top:128.6px;font-size:7px;color:#9c9c9c">400</div>
<div class="a t" style="left:632.36px;top:128.6px;font-size:7px;color:#9c9c9c">500</div>
<div class="a t" style="left:677.08px;top:128.6px;font-size:7px;color:#9c9c9c">600</div>
<div class="a t" style="left:721.80px;top:128.6px;font-size:7px;color:#9c9c9c">700</div>
<div class="a t" style="left:766.52px;top:128.6px;font-size:7px;color:#9c9c9c">800</div>
<div class="a t" style="left:811.24px;top:128.6px;font-size:7px;color:#9c9c9c">900</div>
<div class="a t" style="left:854.01px;top:128.6px;font-size:7px;color:#9c9c9c">1000</div>
<div class="a t" style="left:898.99px;top:128.6px;font-size:7px;color:#9c9c9c">1100</div>
<div class="a t" style="left:953px;top:128.6px;font-size:7.2px;color:#9c9c9c">milímetros</div>
<svg class="a" style="left:0;top:0" width="60" height="576" viewBox="0 0 60 576"><path d="M35,141.35 H37 M33.5,145.82 H37 M35,150.29 H37 M35,154.76 H37 M35,159.24 H37 M35,163.71 H37 M31,168.18 H37 M35,172.65 H37 M35,177.12 H37 M35,181.60 H37 M35,186.07 H37 M33.5,190.54 H37 M35,195.01 H37 M35,199.48 H37 M35,203.96 H37 M35,208.43 H37 M31,212.90 H37 M35,217.37 H37 M35,221.84 H37 M35,226.32 H37 M35,230.79 H37 M33.5,235.26 H37 M35,239.73 H37 M35,244.20 H37 M35,248.68 H37 M35,253.15 H37 M31,257.62 H37 M35,262.09 H37 M35,266.56 H37 M35,271.04 H37 M35,275.51 H37 M33.5,279.98 H37 M35,284.45 H37 M35,288.92 H37 M35,293.40 H37 M35,297.87 H37 M31,302.34 H37 M35,306.81 H37 M35,311.28 H37 M35,315.76 H37 M35,320.23 H37 M33.5,324.70 H37 M35,329.17 H37 M35,333.64 H37 M35,338.12 H37 M35,342.59 H37 M31,347.06 H37 M35,351.53 H37 M35,356.00 H37 M35,360.48 H37 M35,364.95 H37 M33.5,369.42 H37 M35,373.89 H37 M35,378.36 H37 M35,382.84 H37 M35,387.31 H37 M31,391.78 H37 M35,396.25 H37 M35,400.72 H37 M35,405.20 H37 M35,409.67 H37 M33.5,414.14 H37 M35,418.61 H37 M35,423.08 H37 M35,427.56 H37 M35,432.03 H37 M31,436.50 H37 M35,440.97 H37 M35,445.44 H37 M35,449.92 H37 M35,454.39 H37 M33.5,458.86 H37 M35,463.33 H37 M35,467.80 H37 M35,472.28 H37 M35,476.75 H37 M31,481.22 H37 M35,485.69 H37 M35,490.16 H37 M35,494.64 H37" stroke="#a4a4a4" stroke-width="0.8"/></svg>
<div class="a t" style="left:23.5px;top:174.02px;font-size:7px;color:#9c9c9c;transform:rotate(-90deg);transform-origin:0 0">600</div>
<div class="a t" style="left:23.5px;top:218.74px;font-size:7px;color:#9c9c9c;transform:rotate(-90deg);transform-origin:0 0">500</div>
<div class="a t" style="left:23.5px;top:263.46px;font-size:7px;color:#9c9c9c;transform:rotate(-90deg);transform-origin:0 0">400</div>
<div class="a t" style="left:23.5px;top:308.18px;font-size:7px;color:#9c9c9c;transform:rotate(-90deg);transform-origin:0 0">300</div>
<div class="a t" style="left:23.5px;top:352.90px;font-size:7px;color:#9c9c9c;transform:rotate(-90deg);transform-origin:0 0">200</div>
<div class="a t" style="left:23.5px;top:397.62px;font-size:7px;color:#9c9c9c;transform:rotate(-90deg);transform-origin:0 0">100</div>
<div class="a t" style="left:23.5px;top:438.45px;font-size:7px;color:#9c9c9c;transform:rotate(-90deg);transform-origin:0 0">0</div>
<div class="a t" style="left:23.5px;top:494px;font-size:7.2px;color:#9c9c9c;transform:rotate(-90deg);transform-origin:0 0">milímetros</div>
<div class="a" style="left:36.5px;top:140px;width:1px;height:357px;background:#e4e4e4;"></div>
<div class="a" style="left:21.6px;top:111px;width:1px;height:420px;background:#dedede;"></div>
<div class="a" style="left:2.6px;top:115px;width:16.7px;height:17.6px;background:#fdfdfd;border:1px solid #cfcfcf;"></div>
<svg class="a" style="left:4px;top:117px" width="15" height="15" viewBox="0 0 15 15"><path d="M4,1.5 L4,12 L6.5,9.5 L8.5,13.5 L10,12.8 L8,9 L11.5,9Z" fill="#222"/><path d="M12.5,13.5 H15 V11Z" fill="#555"/></svg>
<svg class="a" style="left:2px;top:139px" width="18" height="16" viewBox="0 0 18 16"><path d="M6,1 C4,3 5,5 6,6 L7,13" fill="none" stroke="#333" stroke-width="1.1"/><circle cx="6" cy="5" r="1.2" fill="#333"/><path d="M9,8 L13,11 L11,12Z" fill="#222"/><path d="M14.5,14.5 H17 V12Z" fill="#555"/></svg>
<div class="a" style="left:4px;top:159.5px;width:14px;height:1px;background:#dcdcdc;"></div>
<svg class="a" style="left:2px;top:166px" width="18" height="16" viewBox="0 0 18 16"><rect x="5" y="1" width="8" height="13" rx="1.5" fill="#fff" stroke="#222" stroke-width="1.2"/><rect x="5" y="1" width="8" height="6" rx="1.5" fill="#222"/><path d="M14.5,14.5 H17 V12Z" fill="#555"/></svg>
<svg class="a" style="left:2px;top:189px" width="18" height="16" viewBox="0 0 18 16"><circle cx="7.5" cy="6.5" r="4.5" fill="none" stroke="#333" stroke-width="1.3"/><path d="M11,10 L14.5,13.5" stroke="#333" stroke-width="1.6"/><path d="M14.5,14.5 H17 V12Z" fill="#555"/></svg>
<div class="a" style="left:4px;top:209px;width:14px;height:1px;background:#dcdcdc;"></div>
<svg class="a" style="left:2px;top:216px" width="18" height="16" viewBox="0 0 18 16"><path d="M4,1.5 V5.5 M2,3.5 H6" stroke="#333" stroke-width="1"/><path d="M5,13 V8 M5,12 C7,9 8,13 9,10 C10,8 11,13 12,10 C13,9 13,12 14,11" fill="none" stroke="#333" stroke-width="1.1"/><path d="M14.5,14.5 H17 V12Z" fill="#555"/></svg>
<svg class="a" style="left:2px;top:239px" width="18" height="16" viewBox="0 0 18 16"><path d="M14,1 L7,9 L8.5,10.5 L15,2.5Z" fill="#222"/><path d="M7,9 C4.5,9.5 4,12 3,14.5 C6,14 8,13 8.5,10.5Z" fill="#222"/><path d="M14.5,14.5 H17 V12Z" fill="#555"/></svg>
<svg class="a" style="left:2px;top:260px" width="18" height="16" viewBox="0 0 18 16"><rect x="3.5" y="1.5" width="11" height="11.5" fill="none" stroke="#333" stroke-width="1.3"/><path d="M14.5,14.5 H17 V12Z" fill="#555"/></svg>
<svg class="a" style="left:2px;top:282px" width="18" height="16" viewBox="0 0 18 16"><circle cx="9" cy="7.5" r="6" fill="none" stroke="#333" stroke-width="1.3"/><path d="M14.5,14.5 H17 V12Z" fill="#555"/></svg>
<svg class="a" style="left:2px;top:303.5px" width="18" height="16" viewBox="0 0 18 16"><path d="M6,1.5 H12 L15,7.5 L12,13.5 H6 L3,7.5Z" fill="none" stroke="#333" stroke-width="1.3"/><path d="M14.5,14.5 H17 V12Z" fill="#555"/></svg>
<div class="a" style="left:4px;top:324px;width:14px;height:1px;background:#dcdcdc;"></div>
<svg class="a" style="left:2px;top:331px" width="18" height="16" viewBox="0 0 18 16"><path d="M3,14 L8.5,1 H9.5 L15,14 M5.2,9.5 H12.8" fill="none" stroke="#222" stroke-width="1.6"/><path d="M14.5,14.5 H17 V12Z" fill="#555"/></svg>
<div class="a" style="left:4px;top:352px;width:14px;height:1px;background:#dcdcdc;"></div>
<svg class="a" style="left:2px;top:359px" width="18" height="16" viewBox="0 0 18 16"><path d="M3,14 L14,2" stroke="#333" stroke-width="1.1"/><circle cx="3.5" cy="13.5" r="1" fill="#333"/><circle cx="13.5" cy="2.5" r="1" fill="#333"/><path d="M14.5,14.5 H17 V12Z" fill="#555"/></svg>
<svg class="a" style="left:2px;top:380px" width="18" height="16" viewBox="0 0 18 16"><path d="M4,3 L13,12" stroke="#333" stroke-width="1.2"/><rect x="2" y="1" width="4" height="4" fill="#c8874a" stroke="#6a3a1a" stroke-width="0.8"/><rect x="11" y="10" width="4" height="4" fill="#c8874a" stroke="#6a3a1a" stroke-width="0.8"/><path d="M14.5,14.5 H17 V12Z" fill="#555"/></svg>
<div class="a" style="left:4px;top:401px;width:14px;height:1px;background:#dcdcdc;"></div>
<svg class="a" style="left:2px;top:408.5px" width="18" height="16" viewBox="0 0 18 16"><rect x="6" y="4" width="10" height="10" fill="#333"/><rect x="3" y="1.5" width="10" height="10" fill="#fff" stroke="#222" stroke-width="1.2"/><path d="M14.5,14.5 H17 V12Z" fill="#555"/></svg>
<svg class="a" style="left:4.5px;top:430.5px" width="13" height="13" viewBox="0 0 6 6"><rect width="6" height="6" fill="#fff"/><path d="M0,0h1v1h-1zM2,0h1v1h-1zM4,0h1v1h-1zM1,1h1v1h-1zM3,1h1v1h-1zM5,1h1v1h-1zM0,2h1v1h-1zM2,2h1v1h-1zM4,2h1v1h-1zM1,3h1v1h-1zM3,3h1v1h-1zM5,3h1v1h-1zM0,4h1v1h-1zM2,4h1v1h-1zM4,4h1v1h-1zM1,5h1v1h-1zM3,5h1v1h-1zM5,5h1v1h-1z" fill="#111"/></svg>
<div class="a" style="left:4px;top:450px;width:14px;height:1px;background:#dcdcdc;"></div>
<svg class="a" style="left:2px;top:458px" width="18" height="16" viewBox="0 0 18 16"><path d="M4,14 L11,6" stroke="#9a6a40" stroke-width="2.4" stroke-linecap="round"/><path d="M9.5,5 L13,1.5 C14.5,0.5 16,2 15,3.5 L11.5,7Z" fill="#222"/><path d="M14.5,14.5 H17 V12Z" fill="#555"/></svg>
<div class="a" style="left:4px;top:478.5px;width:14px;height:1px;background:#dcdcdc;"></div>
<svg class="a" style="left:6px;top:491px" width="10" height="10" viewBox="0 0 10 10"><path d="M5,0.5 V9.5 M0.5,5 H9.5" stroke="#999" stroke-width="1.1"/></svg>
<div class="a t" style="left:8px;top:516px;font-size:10px;color:#aaa">»</div>
<!--/C4-->
<!--C5-->
<div class="a" style="left:983.3px;top:164px;width:1.2px;height:271px;background:#7a7a7a;"></div>
<div class="a" style="left:990px;top:111px;width:3.5px;height:404px;background:#f7f7f7;"></div>
<div class="a" style="left:993.8px;top:111px;width:16px;height:404px;background:#ebebeb;"></div>
<div class="a" style="left:993.8px;top:111px;width:1px;height:404px;background:#dddddd;"></div>
<svg class="a" style="left:997px;top:116px" width="9" height="9" viewBox="0 0 9 9"><path d="M1,1 L8,8 M8,1 L1,8" stroke="#b0b0b0" stroke-width="1.1"/></svg>
<div class="a" style="left:994.5px;top:129px;width:15px;height:70.5px;background:#d9d9d9;"></div>
<svg class="a" style="left:996px;top:131px" width="12" height="11" viewBox="0 0 12 11"><path d="M1,4 L6,1.5 L11,4 L6,6.5Z" fill="#222"/><path d="M3,5 V9.5 C4,10.5 8,10.5 9,9.5 V5" fill="#222"/><path d="M10.5,4 V8" stroke="#222"/></svg>
<div class="a t" style="left:1007.5px;top:148.5px;font-size:9px;color:#2a2a2a;transform:rotate(90deg) scaleX(0.986);transform-origin:0 0">Aprender</div>
<div class="a" style="left:994.5px;top:199.5px;width:15px;height:88px;background:#cfe3f7;"></div>
<svg class="a" style="left:996px;top:204px" width="13" height="13" viewBox="0 0 13 13"><path d="M1,5 L5,1 L9,5 L5,9Z" fill="none" stroke="#222" stroke-width="1.3"/><path d="M5,1 L9,5 L5,9" fill="#222"/><path d="M10.5,7 V12 M12.2,7 V12" stroke="#222" stroke-width="0.9"/><path d="M0.5,8 C0,10 1.5,11 2,9.5" fill="#222"/></svg>
<div class="a t" style="left:1007.5px;top:220px;font-size:9px;color:#2a3550;transform:rotate(90deg) scaleX(0.989);transform-origin:0 0">Propiedades</div>
<svg class="a" style="left:996px;top:290px" width="13" height="13" viewBox="0 0 13 13"><path d="M6.5,0.5 L12,4 L6.5,7.5 L1,4Z" fill="none" stroke="#222" stroke-width="1.3"/><path d="M1,7 L6.5,10.5 L12,7" fill="none" stroke="#222" stroke-width="1.3"/><path d="M1,9.5 L6.5,13 L12,9.5" fill="none" stroke="#222" stroke-width="1"/></svg>
<div class="a t" style="left:1007.5px;top:306.5px;font-size:9px;color:#2a2a2a;transform:rotate(90deg) scaleX(1.000);transform-origin:0 0">Objetos</div>
<svg class="a" style="left:996px;top:359.5px" width="13" height="13" viewBox="0 0 13 13"><path d="M12.5,0.5 L12.5,6 L7,3Z" fill="#3a9ad8"/><path d="M3,9 L8,4 L10,6 L5,11Z" fill="#222"/><path d="M3,9 L1,12.5 L5,11" fill="#222"/></svg>
<div class="a t" style="left:1007.5px;top:376.5px;font-size:9px;color:#2a2a2a;transform:rotate(90deg) scaleX(1.048);transform-origin:0 0">Pointillizer</div>
<svg class="a" style="left:995.5px;top:438px" width="13" height="10" viewBox="0 0 13 10"><circle cx="3.5" cy="6.5" r="2.7" fill="none" stroke="#222" stroke-width="1.4"/><circle cx="9.5" cy="6.5" r="2.7" fill="none" stroke="#222" stroke-width="1.4"/><path d="M3,1.5 L2,5 M10,1.5 L11,5 M5.5,5 H7.5" stroke="#222" stroke-width="1.3"/></svg>
<svg class="a" style="left:997px;top:455px" width="10" height="10" viewBox="0 0 10 10"><path d="M5,0.5 V9.5 M0.5,5 H9.5" stroke="#999" stroke-width="1.1"/></svg>
<div class="a" style="left:1010px;top:111px;width:14px;height:420px;background:#f0f0f0;"></div>
<div class="a" style="left:1010px;top:111px;width:1px;height:420px;background:#dedede;"></div>
<svg class="a" style="left:1013px;top:118px" width="8" height="8" viewBox="0 0 8 8"><path d="M2,1 L6.5,4 L2,7Z" fill="#555"/></svg>
<svg class="a" style="left:1011px;top:136px" width="12" height="12" viewBox="0 0 12 12"><path d="M2,11 L9,4" stroke="#c0c0c0" stroke-width="1.6"/><path d="M8,3 L10,1 L11.5,2.5 L9.5,4.5Z" fill="#c0c0c0"/></svg>
<svg class="a" style="left:1012px;top:150px" width="10" height="6" viewBox="0 0 10 6"><path d="M1,5 L5,1 L9,5" fill="none" stroke="#bbb" stroke-width="1.1"/></svg>
<div class="a" style="left:1010.5px;top:160.5px;width:13.5px;height:12.78px;background:#fff;border:1px solid #999"></div>
<svg class="a" style="left:1011px;top:161.5px" width="13" height="12" viewBox="0 0 13 12"><path d="M1,11 L12,1" stroke="#e06060" stroke-width="1"/></svg>
<div class="a" style="left:1010.5px;top:173.28px;width:13.5px;height:13.08px;background:#1b1b1b"></div>
<div class="a" style="left:1010.5px;top:186.06px;width:13.5px;height:13.08px;background:#3a3a3a"></div>
<div class="a" style="left:1010.5px;top:198.84px;width:13.5px;height:13.08px;background:#585858"></div>
<div class="a" style="left:1010.5px;top:211.62px;width:13.5px;height:13.08px;background:#737373"></div>
<div class="a" style="left:1010.5px;top:224.40px;width:13.5px;height:13.08px;background:#8b8b8b"></div>
<div class="a" style="left:1010.5px;top:237.18px;width:13.5px;height:13.08px;background:#a2a2a2"></div>
<div class="a" style="left:1010.5px;top:249.96px;width:13.5px;height:13.08px;background:#b4b4b4"></div>
<div class="a" style="left:1010.5px;top:262.74px;width:13.5px;height:13.08px;background:#c8c8c8"></div>
<div class="a" style="left:1010.5px;top:275.52px;width:13.5px;height:13.08px;background:#dadada"></div>
<div class="a" style="left:1010.5px;top:288.30px;width:13.5px;height:13.08px;background:#eeeeee"></div>
<div class="a" style="left:1010.5px;top:301.08px;width:13.5px;height:13.08px;background:#ffffff"></div>
<div class="a" style="left:1010.5px;top:313.86px;width:13.5px;height:13.08px;background:#2d2b8c"></div>
<div class="a" style="left:1010.5px;top:326.64px;width:13.5px;height:13.08px;background:#12a0e0"></div>
<div class="a" style="left:1010.5px;top:339.42px;width:13.5px;height:13.08px;background:#11a04c"></div>
<div class="a" style="left:1010.5px;top:352.20px;width:13.5px;height:13.08px;background:#ffe600"></div>
<div class="a" style="left:1010.5px;top:364.98px;width:13.5px;height:13.08px;background:#e2101c"></div>
<div class="a" style="left:1010.5px;top:377.76px;width:13.5px;height:13.08px;background:#e5087f"></div>
<div class="a" style="left:1010.5px;top:390.54px;width:13.5px;height:13.08px;background:#a3418f"></div>
<div class="a" style="left:1010.5px;top:403.32px;width:13.5px;height:13.08px;background:#f28a12"></div>
<div class="a" style="left:1010.5px;top:416.10px;width:13.5px;height:13.08px;background:#f4b3bf"></div>
<div class="a" style="left:1010.5px;top:428.88px;width:13.5px;height:13.08px;background:#8c7b72"></div>
<div class="a" style="left:1010.5px;top:441.66px;width:13.5px;height:13.08px;background:#dcd8ee"></div>
<div class="a" style="left:1010.5px;top:454.44px;width:13.5px;height:13.08px;background:#aaa2d6"></div>
<div class="a" style="left:1010.5px;top:467.22px;width:13.5px;height:13.08px;background:#6f8fd2"></div>
<div class="a" style="left:1010.5px;top:480.00px;width:13.5px;height:13.08px;background:#7a69b5"></div>
<div class="a" style="left:1010.5px;top:492.78px;width:13.5px;height:7.52px;background:#8c86ad"></div>
<div class="a" style="left:1010.5px;top:262.74px;width:13.5px;height:12.78px;border:1.2px solid #555"></div>
<svg class="a" style="left:1012px;top:502px" width="10" height="6" viewBox="0 0 10 6"><path d="M1,1 L5,5 L9,1" fill="none" stroke="#999" stroke-width="1.1"/></svg>
<div class="a t" style="left:1012px;top:513px;font-size:10px;color:#aaa">»</div>
<svg class="a" style="left:980px;top:519.5px" width="6" height="10" viewBox="0 0 6 10"><path d="M1,1 L5,5 L1,9" fill="none" stroke="#c4c4c4" stroke-width="1.1"/></svg>
<div class="a t" style="left:992px;top:518px;font-size:10px;color:#c0c0c0">»</div>
<div class="a" style="left:50px;top:490.5px;width:915px;height:1.3px;background:#7a7a7a;"></div>
<svg class="a" style="left:980px;top:486px" width="10" height="10" viewBox="0 0 10 10"><circle cx="4" cy="4" r="3" fill="none" stroke="#777" stroke-width="1.1"/><path d="M6,6 L9,9" stroke="#777" stroke-width="1.4"/><path d="M2.5,4 H5.5 M4,2.5 V5.5" stroke="#777" stroke-width="0.8"/></svg>
<div class="a" style="left:23px;top:497px;width:971px;height:1px;background:#e6e6e6;"></div>
<svg class="a" style="left:28px;top:502px" width="8" height="8" viewBox="0 0 8 8"><path d="M4,0.5 V7.5 M0.5,4 H7.5" stroke="#333" stroke-width="1.3"/></svg>
<svg class="a" style="left:45px;top:502.5px" width="8" height="7" viewBox="0 0 8 7"><path d="M1,0.5 V6.5" stroke="#c0c0c0" stroke-width="1.1"/><path d="M7.5,0.5 V6.5 L2.5,3.5Z" fill="#c0c0c0"/></svg>
<svg class="a" style="left:64px;top:502.5px" width="6" height="7" viewBox="0 0 6 7"><path d="M5.5,0.5 V6.5 L0.5,3.5Z" fill="#c0c0c0"/></svg>
<div class="a t" style="left:81.2px;top:501.7px;font-size:9.5px;color:#bdbdbd;transform:scaleX(1.034);transform-origin:0 0">1 de 1</div>
<svg class="a" style="left:122px;top:502.5px" width="6" height="7" viewBox="0 0 6 7"><path d="M0.5,0.5 V6.5 L5.5,3.5Z" fill="#c0c0c0"/></svg>
<svg class="a" style="left:138.5px;top:502.5px" width="8" height="7" viewBox="0 0 8 7"><path d="M7,0.5 V6.5" stroke="#c0c0c0" stroke-width="1.1"/><path d="M0.5,0.5 V6.5 L5.5,3.5Z" fill="#c0c0c0"/></svg>
<svg class="a" style="left:155.5px;top:502px" width="8" height="8" viewBox="0 0 8 8"><path d="M4,0.5 V7.5 M0.5,4 H7.5" stroke="#333" stroke-width="1.3"/></svg>
<div class="a" style="left:168.8px;top:498px;width:73.6px;height:17.5px;background:#d7d7d7;"></div>
<div class="a t" style="left:189px;top:501.7px;font-size:9.5px;color:#333;transform:scaleX(0.880);transform-origin:0 0">Página 1</div>
<div class="a" style="left:22.6px;top:515.5px;width:971.4px;height:15.5px;background:#f4f4f4;"></div>
<div class="a" style="left:24.5px;top:518px;width:4px;height:11px;background:#e4e4e4;"></div>
<svg class="a" style="left:34px;top:520.5px" width="5" height="7" viewBox="0 0 5 7"><path d="M0.5,0.5 L4,3.5 L0.5,6.5Z" fill="#444"/></svg>
<svg class="a" style="left:46px;top:518px" width="11" height="12" viewBox="0 0 11 12"><path d="M1.5,10.5 L6.5,5.5" stroke="#444" stroke-width="1.5" stroke-linecap="round"/><circle cx="8" cy="3.8" r="2.6" fill="#222"/></svg>
<svg class="a" style="left:62px;top:519px" width="6" height="10" viewBox="0 0 6 10"><path d="M5,1 L1,5 L5,9" fill="none" stroke="#c8c8c8" stroke-width="1.1"/></svg>
<div class="a" style="left:71.3px;top:517.3px;width:12.7px;height:12.3px;background:#fff;border:1px solid #888"></div>
<svg class="a" style="left:72px;top:518px" width="12" height="11" viewBox="0 0 12 11"><path d="M1,10.5 L11,0.5" stroke="#d07070" stroke-width="0.9"/></svg>
<div class="a" style="left:84.00px;top:517.3px;width:12.9px;height:12.3px;background:#343434"></div>
<div class="a" style="left:96.70px;top:517.3px;width:12.9px;height:12.3px;background:#5fb331"></div>
<div class="a" style="left:109.40px;top:517.3px;width:12.9px;height:12.3px;background:#0e9a47"></div>
<div class="a" style="left:122.10px;top:517.3px;width:12.9px;height:12.3px;background:#076a34"></div>
<div class="a" style="left:134.80px;top:517.3px;width:12.9px;height:12.3px;background:#14978a"></div>
<div class="a" style="left:147.50px;top:517.3px;width:12.9px;height:12.3px;background:#0d8173"></div>
<div class="a" style="left:160.20px;top:517.3px;width:12.9px;height:12.3px;background:#5db434"></div>
<div class="a" style="left:172.90px;top:517.3px;width:12.9px;height:12.3px;background:#a8cb1c"></div>
<div class="a" style="left:86px;top:526px;width:2.5px;height:2.5px;background:#ddd;"></div>
<div class="a" style="left:0px;top:531px;width:1024px;height:25px;background:#f2f2f2;"></div>
<div class="a" style="left:0px;top:531px;width:1024px;height:1px;background:#dcdcdc;"></div>
<svg class="a" style="left:7px;top:539px" width="14" height="14" viewBox="0 0 14 14"><circle cx="6.5" cy="6.5" r="3.3" fill="none" stroke="#1a1a1a" stroke-width="2.2"/><path d="M6.5,0.5 V3 M6.5,10 V12.5 M0.5,6.5 H3 M10,6.5 H12.5 M2.3,2.3 L4,4 M9,9 L10.7,10.7 M10.7,2.3 L9,4 M4,9 L2.3,10.7" stroke="#1a1a1a" stroke-width="2"/><path d="M11,13.5 L13.5,13.5 L13.5,11Z" fill="#555"/></svg>
<div class="a t" style="left:26.7px;top:540.51px;font-size:9.6px;color:#222;transform:scaleX(0.924);transform-origin:0 0">Clic siguiente para Arrastrar/Escalar; Clic segundo para Girar/Inclinar; Doble clic en herramienta selecciona todos los objetos; Mayús+clic selecciona varios objetos; Alt+clic selecciona objetos subyacentes</div>
<svg class="a" style="left:871px;top:539px" width="14" height="13" viewBox="0 0 14 13"><path d="M2,6 L6,2 L10,6 L6,10Z" fill="none" stroke="#222" stroke-width="1.4"/><path d="M4.5,6 L6,4.5 L7.5,6 L6,7.5Z" fill="#a03030"/><path d="M11,7 C12.5,9 12.5,10.5 11,10.5 C9.5,10.5 9.5,9 11,7Z" fill="#c03030"/></svg>
<div class="a" style="left:885px;top:537px;width:17px;height:17px;background:#fafafa;border:1px solid #c8c8c8"></div>
<svg class="a" style="left:885px;top:537px" width="17" height="17" viewBox="0 0 17 17"><path d="M1.5,15.5 L15.5,1.5" stroke="#b0303a" stroke-width="1.3"/></svg>
<div class="a t" style="left:904.5px;top:540.51px;font-size:9.6px;color:#222;transform:scaleX(0.979);transform-origin:0 0">Ninguna</div>
<!--/C5-->
</body></html>
